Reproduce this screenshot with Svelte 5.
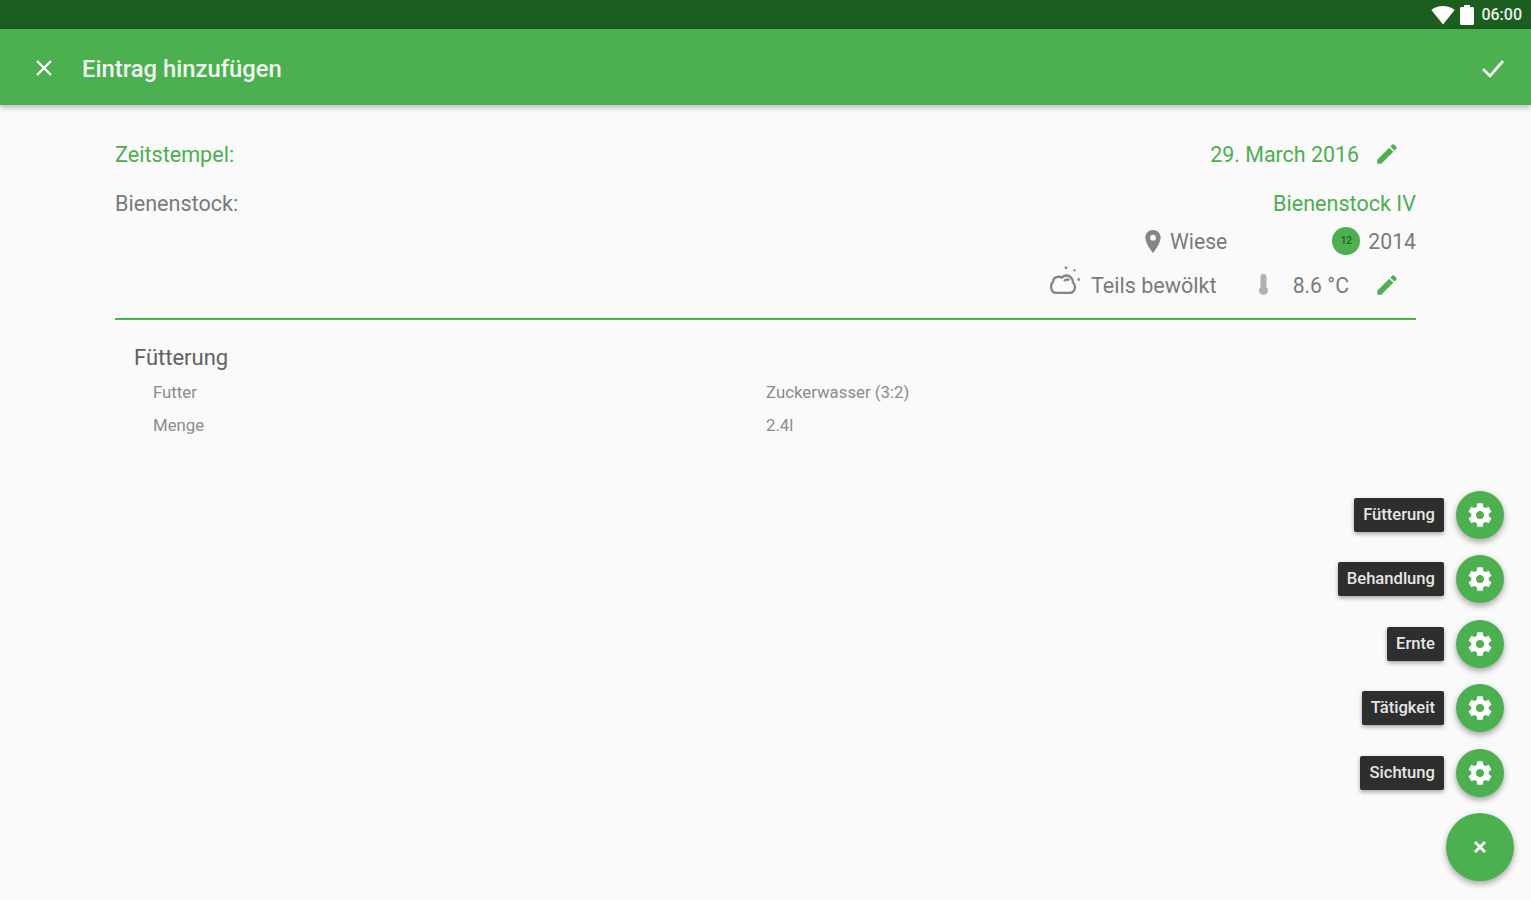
<script>
  const actions = ["Fütterung", "Behandlung", "Ernte", "Tätigkeit", "Sichtung"];
  const details = [
    { label: "Futter", value: "Zuckerwasser (3:2)" },
    { label: "Menge", value: "2.4l" },
  ];
  const gear = "M19.43 12.98c.04-.32.07-.64.07-.98s-.03-.66-.07-.98l2.11-1.65c.19-.15.24-.42.12-.64l-2-3.46c-.12-.22-.39-.3-.61-.22l-2.49 1c-.52-.4-1.08-.73-1.69-.98l-.38-2.65C14.46 2.18 14.25 2 14 2h-4c-.25 0-.46.18-.49.42l-.38 2.65c-.61.25-1.17.59-1.69.98l-2.49-1c-.23-.09-.49 0-.61.22l-2 3.46c-.13.22-.07.49.12.64l2.11 1.65c-.04.32-.07.65-.07.98s.03.66.07.98l-2.11 1.65c-.19.15-.24.42-.12.64l2 3.46c.12.22.39.3.61.22l2.49-1c.52.4 1.08.73 1.69.98l.38 2.65c.03.24.24.42.49.42h4c.25 0 .46-.18.49-.42l.38-2.65c.61-.25 1.17-.59 1.69-.98l2.49 1c.23.09.49 0 .61-.22l2-3.46c.12-.22.07-.49-.12-.64l-2.11-1.65zM12 15.5c-1.93 0-3.5-1.57-3.5-3.5s1.57-3.5 3.5-3.5 3.5 1.57 3.5 3.5-1.57 3.5-3.5 3.5z";
  const pencil = "M3 17.25V21h3.75L17.81 9.94l-3.75-3.75L3 17.25zM20.71 7.04c.39-.39.39-1.02 0-1.41l-2.34-2.34c-.39-.39-1.02-.39-1.41 0l-1.83 1.83 3.75 3.75 1.83-1.83z";
</script>

<div class="screen">
  <div class="statusbar">
    <svg class="wifi" viewBox="0 0 24 24"><path d="M12.01 21.49L23.64 7c-.45-.34-4.93-4-11.64-4C5.28 3 .81 6.66.36 7l11.64 14.49z" /></svg>
    <svg class="battery" viewBox="0 0 14 20"><path d="M4 0h6v2h2.5c.8 0 1.5.7 1.5 1.5v15c0 .8-.7 1.5-1.5 1.5h-11C.7 20 0 19.3 0 18.5v-15C0 2.700.7 2 1.500 2H4z" /></svg>
    <span class="clock">06:00</span>
  </div>

  <header class="appbar">
    <svg class="close" viewBox="0 0 18 18"><path d="M2 2l14 14M16 2L2 16" /></svg>
    <h1>Eintrag hinzufügen</h1>
    <svg class="check" viewBox="0 0 24 24"><path d="M2 13l7 7L22 5" /></svg>
  </header>

  <main class="content">
    <div class="row first">
      <span class="green">Zeitstempel:</span>
      <div class="right">
        <span class="green date">29. March 2016</span>
        <svg class="pencil" viewBox="0 0 24 24"><path d={pencil} /></svg>
      </div>
    </div>

    <div class="row hive">
      <span>Bienenstock:</span>
      <span class="green">Bienenstock IV</span>
    </div>

    <div class="meta location">
      <svg class="pin" viewBox="0 0 16 24"><path d="M8 0C3.600 0 0 3.500 0 8c0 6 8 16 8 16s8-10 8-16c0-4.500-3.600-8-8-8zm0 11a3 3 0 1 1 0-6 3 3 0 0 1 0 6z" /></svg>
      <span class="place">Wiese</span>
      <span class="badge">12</span>
      <span>2014</span>
    </div>

    <div class="meta weather">
      <svg class="cloud" viewBox="0 0 32 28">
        <path d="M7 27h12c3.500 0 6-2.500 6-6 0-2-1-3.500-2-4.500 0-4-3-7-6.500-7-2 0-3.500.8-4.500 2-1-.5-2-.8-3-.8C5 10.700 3 13 3 16c-1.500 1-2 3-2 5 0 3.500 2.500 6 6 6z" />
        <path d="M14 15c1.500-1.500 3.500-1.800 5.500-1" />
        <path d="M16 .5v2.500M25 3.500l-1 1.500M27.500 13.500H30" />
      </svg>
      <span class="sky">Teils bewölkt</span>
      <svg class="thermo" viewBox="0 0 12 22"><path d="M3 3a3 3 0 0 1 6 0v10a4.500 4.500 0 1 1-6 0z" /></svg>
      <span class="temp">8.6 °C</span>
      <svg class="pencil" viewBox="0 0 24 24"><path d={pencil} /></svg>
    </div>

    <hr />

    <section class="entry">
      <h2>Fütterung</h2>
      {#each details as item}
        <div class="detail">
          <span>{item.label}</span>
          <span>{item.value}</span>
        </div>
      {/each}
    </section>
  </main>

  <div class="fabs">
    {#each actions as action}
      <div class="action">
        <span class="tip">{action}</span>
        <button class="fab-small" aria-label={action}>
          <svg viewBox="0 0 24 24"><path d={gear} /></svg>
        </button>
      </div>
    {/each}
    <button class="fab-main" aria-label="Schließen">
      <svg viewBox="0 0 18 18"><path d="M4 4l10 10M14 4L4 14" /></svg>
    </button>
  </div>
</div>

<style>
  :global(body) {
    margin: 0;
    background: #fafafa;
  }

  .screen {
    position: relative;
    height: 900px;
    overflow: hidden;
    background: #fafafa;
    font-family: Roboto, "Liberation Sans", sans-serif;
    font-size: 21.600px;
    color: #7a7a7a;
  }

  .statusbar {
    height: 29px;
    box-sizing: border-box;
    display: flex;
    align-items: center;
    justify-content: flex-end;
    padding-right: 9px;
    background: #1b5e20;
    color: #fff;
  }
  .wifi {
    width: 24px;
    height: 24px;
    fill: #fff;
    margin-right: 5px;
  }
  .battery {
    width: 14px;
    height: 20px;
    fill: #fff;
    margin-right: 7px;
  }
  .clock {
    font-size: 16px;
    font-weight: 500;
    color: #e8efe8;
  }

  .appbar {
    position: relative;
    height: 76px;
    box-sizing: border-box;
    display: flex;
    align-items: center;
    padding: 2px 26px 0 35px;
    background: #4caf50;
    box-shadow: 0 2px 6px rgba(0, 0, 0, 0.3);
    color: #fff;
  }
  .close {
    width: 18px;
    height: 18px;
    fill: none;
    stroke: #fff;
    stroke-width: 2.400;
  }
  h1 {
    flex: 1;
    margin: 2px 0 0 29px;
    font-size: 23.800px;
    font-weight: 500;
    color: #f1f8f1;
  }
  .check {
    width: 24px;
    height: 24px;
    fill: none;
    stroke: #f1f8f1;
    stroke-width: 2.800;
  }

  .content {
    padding: 0 115px;
  }
  .green {
    color: #4caf50;
  }
  .row {
    display: flex;
    align-items: center;
    justify-content: space-between;
    height: 28px;
  }
  .first {
    margin-top: 35px;
  }
  .right {
    display: flex;
    align-items: center;
    gap: 16px;
    padding-right: 16px;
  }
  .date {
    font-size: 21.400px;
    margin-right: -1px;
  }
  .pencil {
    width: 26px;
    height: 26px;
    fill: #4caf50;
  }
  .hive {
    margin-top: 21px;
  }

  .meta {
    display: flex;
    align-items: center;
    justify-content: flex-end;
    height: 28px;
    font-size: 21.200px;
  }
  .location {
    margin-top: 10px;
  }
  .pin {
    width: 16px;
    height: 23px;
    fill: #858585;
    margin-right: 9px;
  }
  .place {
    margin-right: 105px;
  }
  .badge {
    width: 28px;
    height: 28px;
    margin-right: 8px;
    border-radius: 50%;
    background: #4caf50;
    color: #1b5e20;
    font-size: 10px;
    font-weight: 500;
    line-height: 28px;
    text-align: center;
  }
  .weather {
    margin-top: 16px;
    padding-right: 16px;
  }
  .cloud {
    flex: none;
    width: 32px;
    height: 28px;
    margin: 0 9px 10px 0;
    fill: none;
    stroke: #858585;
    stroke-width: 2.400;
  }
  .sky {
    margin-right: 40px;
    font-size: 21.600px;
  }
  .thermo {
    width: 13px;
    height: 22px;
    margin-right: 23px;
    fill: #b0b0b0;
  }
  .temp {
    margin-right: 25px;
  }

  hr {
    margin: 19px 0 0;
    border: 0;
    height: 2px;
    background: #4caf50;
  }

  .entry {
    padding: 24px 0 0 19px;
  }
  h2 {
    margin: 0 0 10px;
    font-size: 22px;
    line-height: 28px;
    font-weight: 400;
    color: #616161;
  }
  .detail {
    display: grid;
    grid-template-columns: 613px 1fr;
    padding-left: 19px;
    height: 32.500px;
    line-height: 20px;
    font-size: 16.800px;
    color: #8c8c8c;
  }

  .fabs {
    position: absolute;
    right: 17px;
    bottom: 19px;
    display: flex;
    flex-direction: column;
    align-items: flex-end;
    gap: 16.500px;
  }
  .action {
    display: flex;
    align-items: center;
    gap: 12px;
    padding-right: 10px;
  }
  .tip {
    height: 34px;
    padding: 0 9px;
    border-radius: 2px;
    background: #2e2e2e;
    box-shadow: 0 2px 4px rgba(0, 0, 0, 0.35);
    color: #e6e6e6;
    font-size: 16.600px;
    font-weight: 500;
    line-height: 34px;
  }
  button {
    display: flex;
    align-items: center;
    justify-content: center;
    padding: 0;
    border: 0;
    border-radius: 50%;
    background: #4caf50;
    box-shadow: 0 3px 6px rgba(0, 0, 0, 0.35);
  }
  .fab-small {
    width: 48px;
    height: 48px;
  }
  .fab-small svg {
    width: 28px;
    height: 28px;
    fill: #fff;
  }
  .fab-main {
    width: 68px;
    height: 68px;
  }
  .fab-main svg {
    width: 18px;
    height: 18px;
    fill: none;
    stroke: #fff;
    stroke-width: 2.800;
  }
</style>
